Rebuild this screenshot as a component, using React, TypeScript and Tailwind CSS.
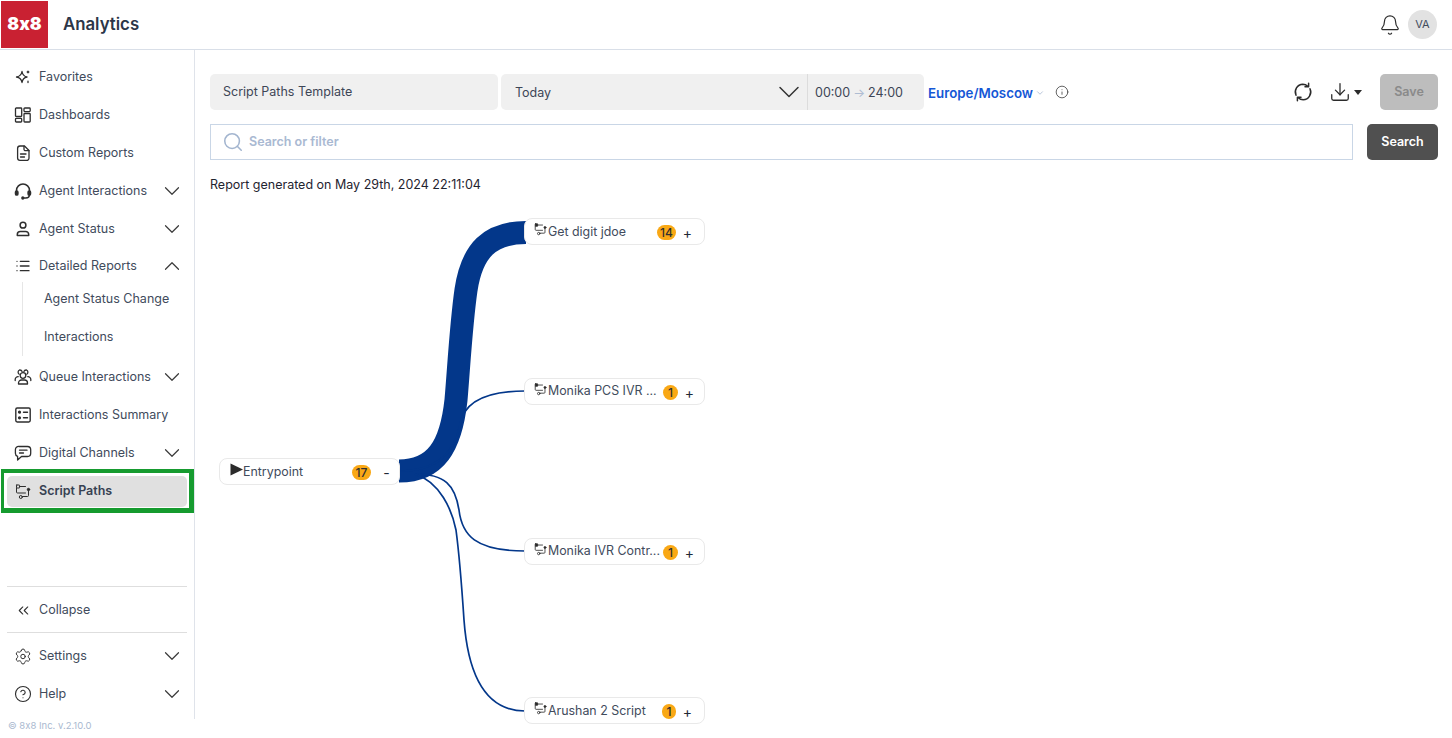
import React from 'react';
import {
  Bell,
  ChevronDown,
  ChevronUp,
  ChevronsLeft,
  CircleHelp,
  Download,
  Info,
  List,
  Search,
  Settings,
} from 'lucide-react';

const S = { fill: 'none', stroke: 'currentColor', strokeWidth: 1.3, strokeLinecap: 'round', strokeLinejoin: 'round' } as const;

function SparkIcon() {
  return (
    <svg viewBox="0 0 18 18" className="w-[18px] h-[18px]" {...S}>
      <path d="M8 3.5 C8.6 7 10 8.4 13 9 C10 9.6 8.6 11 8 14.5 C7.4 11 6 9.6 2.5 9 C6 8.4 7.4 7 8 3.5 Z" />
      <path d="M14 3.2v1.6M13.2 4h1.6M14 13.2v1.4" />
    </svg>
  );
}

function DashIcon() {
  return (
    <svg viewBox="0 0 18 18" className="w-[18px] h-[18px]" {...S}>
      <rect x="1.5" y="2" width="6.2" height="8.5" rx="0.8" />
      <rect x="1.5" y="12.4" width="6.2" height="3.6" rx="0.8" />
      <rect x="10" y="2" width="6.2" height="3.6" rx="0.8" />
      <rect x="10" y="7.5" width="6.2" height="8.5" rx="0.8" />
    </svg>
  );
}

function DocIcon() {
  return (
    <svg viewBox="0 0 18 18" className="w-[18px] h-[18px]" {...S}>
      <path d="M6 2h4.5L15 6.5V14a2.4 2.4 0 0 1-2.4 2.4H6A2.4 2.4 0 0 1 3.6 14V4.4A2.4 2.4 0 0 1 6 2Z" />
      <path d="M10 2.2v3a1.5 1.5 0 0 0 1.5 1.5H15M6.5 10h5.5M6.5 13h4" />
    </svg>
  );
}

function HeadsetIcon() {
  return (
    <svg viewBox="0 0 18 18" className="w-[18px] h-[18px]" {...S} strokeWidth={1.5}>
      <path d="M2.5 10V8.5a6.5 6.5 0 0 1 13 0V10" />
      <rect x="1.5" y="9" width="2.4" height="4" rx="1.1" fill="currentColor" />
      <rect x="14.1" y="9" width="2.4" height="4" rx="1.1" fill="currentColor" />
      <path d="M15.3 13c0 2-1.5 3-3.5 3H9.5" />
      <circle cx="8.8" cy="16" r="0.9" fill="currentColor" />
    </svg>
  );
}

function PersonIcon() {
  return (
    <svg viewBox="0 0 18 18" className="w-[18px] h-[18px]" {...S} strokeWidth={1.5}>
      <circle cx="9" cy="5.2" r="2.9" />
      <path d="M3.3 15.5v-1A3 3 0 0 1 6.3 11.5h5.4a3 3 0 0 1 3 3v1Z" />
    </svg>
  );
}

function GroupIcon() {
  return (
    <svg viewBox="0 0 18 18" className="w-[18px] h-[18px]" {...S}>
      <circle cx="9" cy="7.5" r="2.8" />
      <path d="M4.5 16v-1a3 3 0 0 1 3-3h3a3 3 0 0 1 3 3v1Z" />
      <path d="M5.2 6.2A2.4 2.4 0 0 1 5.5 2a2.5 2.5 0 0 1 2.6 1.6M12.8 6.2A2.4 2.4 0 0 0 12.5 2a2.5 2.5 0 0 0-2.6 1.6" />
      <path d="M1.2 12.5v-1.2a2.8 2.8 0 0 1 3-2.6M16.8 12.5v-1.2a2.8 2.8 0 0 0-3-2.6" />
    </svg>
  );
}

function SummaryIcon() {
  return (
    <svg viewBox="0 0 18 18" className="w-[18px] h-[18px]" {...S} strokeWidth={1.4}>
      <rect x="1.8" y="2" width="14.4" height="14" rx="1.4" />
      <path d="M9.5 6.2h4M9.5 11.8h4" />
      <circle cx="5.5" cy="6.2" r="0.9" fill="currentColor" />
      <circle cx="5.5" cy="11.8" r="0.9" fill="currentColor" />
    </svg>
  );
}

function ChatIcon() {
  return (
    <svg viewBox="0 0 18 18" className="w-[18px] h-[18px]" {...S}>
      <path d="M5 2.5h8.5a3.2 3.2 0 0 1 3.2 3.2v3.6a3.2 3.2 0 0 1-3.2 3.2H7.5L3.6 16v-3.6A3.2 3.2 0 0 1 1.4 9.3V5.7A3.2 3.2 0 0 1 5 2.5Z" />
      <path d="M5.5 6.2h7.5M5.5 9h4" />
    </svg>
  );
}

function ScriptIcon({ size = 16, solid = false }: { size?: number; solid?: boolean }) {
  return (
    <svg viewBox="0 0 16 16" width={size} height={size} {...S} strokeWidth={1}>
      <rect x="1.5" y="1" width="3" height="3" rx="0.3" fill={solid ? 'currentColor' : 'none'} />
      <path d="M4.5 2.5H10.5" />
      <path d="M1.5 4V8a1 1 0 0 0 1 1H10.5" />
      <circle cx="13.5" cy="5.5" r="1.2" fill="currentColor" />
      <path d="M13.5 6.7V11.5a1 1 0 0 1-1 1H7.5" />
      <circle cx="5.8" cy="13" r="1.5" />
    </svg>
  );
}

function RefreshIcon() {
  return (
    <svg viewBox="0 0 20 20" className="w-[20px] h-[20px]" fill="none" stroke="#2b2b2b" strokeWidth="1.5" strokeLinecap="round" strokeLinejoin="round">
      <path d="M3 13.2A7.8 7.8 0 0 1 9.8 2.2c2 0 3.6.7 5 2" />
      <path d="M17 6.8a7.8 7.8 0 0 1-6.8 11c-2 0-3.6-.7-5-2" />
      <path d="M15.6 1.2v3.6H12M4.4 18.8v-3.6H8" />
    </svg>
  );
}

type NavEntry = { label: string; icon: React.ReactNode; chevron?: boolean };

const topNav: NavEntry[] = [
  { label: 'Favorites', icon: <SparkIcon /> },
  { label: 'Dashboards', icon: <DashIcon /> },
  { label: 'Custom Reports', icon: <DocIcon /> },
  { label: 'Agent Interactions', icon: <HeadsetIcon />, chevron: true },
  { label: 'Agent Status', icon: <PersonIcon />, chevron: true },
];

const lowerNav: NavEntry[] = [
  { label: 'Queue Interactions', icon: <GroupIcon />, chevron: true },
  { label: 'Interactions Summary', icon: <SummaryIcon /> },
  { label: 'Digital Channels', icon: <ChatIcon />, chevron: true },
];

function NavRow({ label, icon, chevron }: NavEntry) {
  return (
    <div className="flex items-center h-[38px] pl-[14px] pr-[9px] gap-[7px] text-[12.5px] text-[#414b5c]">
      <span className="w-[18px] h-[18px] flex items-center justify-center text-[#2e2e2e] shrink-0">{icon}</span>
      <span className="flex-1 whitespace-nowrap">{label}</span>
      {chevron && <ChevronDown className="w-[26px] h-[26px] text-[#3a3a3a]" strokeWidth={1.1} />}
    </div>
  );
}

function Sidebar() {
  return (
    <aside className="w-[195px] h-[669px] border-r border-[#dfe3ea] flex flex-col pt-[8px] shrink-0">
      {topNav.map((n) => (
        <NavRow key={n.label} {...n} />
      ))}
      <div className="flex items-center h-[32px] mt-[2px] pl-[14px] pr-[9px] gap-[7px] text-[12.5px] text-[#414b5c]">
        <span className="w-[18px] h-[18px] flex items-center justify-center text-[#2e2e2e]">
          <List className="w-[16px] h-[16px]" strokeWidth={2} />
        </span>
        <span className="flex-1">Detailed Reports</span>
        <ChevronUp className="w-[26px] h-[26px] text-[#3a3a3a]" strokeWidth={1.1} />
      </div>
      <div className="ml-[22px] mb-[2px] border-l border-[#e6e6e6] pl-[21px] text-[12.5px] text-[#414b5c]">
        <div className="h-[36px] pb-[2px] flex items-center">Agent Status Change</div>
        <div className="h-[38px] flex items-center">Interactions</div>
      </div>
      {lowerNav.map((n) => (
        <NavRow key={n.label} {...n} />
      ))}
      <div className="-my-[3px] ml-px h-[44px] w-[193px] border-l-[3px] border-r-[5px] border-t-[4px] border-b-[5px] border-[#169b2f] pl-[3px] pr-[2px] pt-[3px] pb-[1px]">
        <div className="h-full rounded-[5px] bg-[#e0e0e0] flex items-center pl-[7px] gap-[7px] text-[12.5px] font-semibold text-[#364152]">
          <span className="w-[18px] h-[18px] flex items-center justify-center text-[#2e2e2e]">
            <ScriptIcon />
          </span>
          Script Paths
        </div>
      </div>
      <div className="mt-auto mx-[7px] border-t border-[#dedede] h-[46px] pt-[2px] flex items-center pl-[7px] gap-[7px] text-[12.5px] text-[#414b5c]">
        <span className="w-[18px] h-[18px] flex items-center justify-center text-[#2e2e2e]">
          <ChevronsLeft className="w-[17px] h-[17px]" strokeWidth={1.5} />
        </span>
        Collapse
      </div>
      <div className="mx-[7px] border-t border-[#dedede]" />
      <div className="pt-[4px] pb-[6px]">
        <NavRow label="Settings" icon={<Settings className="w-[19px] h-[19px]" strokeWidth={1.3} />} chevron />
        <NavRow label="Help" icon={<CircleHelp className="w-[18px] h-[18px]" strokeWidth={1.5} />} chevron />
      </div>
    </aside>
  );
}

function Toolbar() {
  return (
    <div className="flex items-center h-[36px] text-[12.5px] text-[#3d4656]">
      <div className="w-[288px] h-full rounded-[5px] bg-[#f0f0f0] flex items-center pl-[13px]">Script Paths Template</div>
      <div className="ml-[3px] w-[423px] h-full rounded-[5px] bg-[#f0f0f0] flex items-center">
        <div className="w-[307px] h-full flex items-center justify-between pl-[14px] border-r border-[#dcdcdc]">
          <span className="pt-[2px]">Today</span>
          <ChevronDown className="w-[36px] h-[36px] text-[#333]" strokeWidth={1} />
        </div>
        <div className="pl-[7px] pt-[2px] flex items-center gap-[3px] text-[#3d4656]">
          00:00 <span className="text-[#aebcd2]">→</span> 24:00
        </div>
      </div>
      <span className="ml-[4px] pt-[4px] text-[13.3px] font-semibold text-[#1557d6]">Europe/Moscow</span>
      <ChevronDown className="ml-[2px] mt-[2px] w-[10px] h-[10px] text-[#8ea2c4]" strokeWidth={1.5} />
      <Info className="ml-[10px] w-[14px] h-[14px] text-[#333]" strokeWidth={1.3} />
      <div className="ml-auto flex items-center">
        <RefreshIcon />
        <Download className="ml-[16px] w-[22px] h-[22px] text-[#2b2b2b]" strokeWidth={1.4} />
        <span className="ml-[3px] w-0 h-0 border-x-[4px] border-x-transparent border-t-[5px] border-t-[#2b2b2b]" />
        <button className="ml-[18px] w-[58px] h-[36px] rounded-[5px] bg-[#bdbdbd] text-[#8a8a8a] font-semibold">Save</button>
      </div>
    </div>
  );
}

type NodeData = {
  label: string;
  count: number;
  left: number;
  top: number;
  badge: string;
  textW: string;
  textClass: string;
  action: string;
  actionClass: string;
  entry?: boolean;
};

// node boxes sit on the diagram canvas, offsets are relative to the canvas origin (195, 50)
const nodes: NodeData[] = [
  { label: 'Entrypoint', count: 17, left: 24, top: 408, badge: 'w-[19px]', textW: 'w-[109px]', textClass: 'mt-[2px]', action: '-', actionClass: 'pl-[3px]', entry: true },
  { label: 'Get digit jdoe', count: 14, left: 329, top: 168, badge: 'w-[19px]', textW: 'w-[109px]', textClass: 'mt-[2px]', action: '+', actionClass: 'pr-[5px]' },
  { label: 'Monika PCS IVR ...', count: 1, left: 329, top: 328, badge: 'w-[15px]', textW: 'w-[115px]', textClass: '', action: '+', actionClass: 'pr-[3px]' },
  { label: 'Monika IVR Contr...', count: 1, left: 329, top: 488, badge: 'w-[15px]', textW: 'w-[115px]', textClass: '', action: '+', actionClass: 'pr-[3px]' },
  { label: 'Arushan 2 Script', count: 1, left: 329, top: 647, badge: 'w-[14px]', textW: 'w-[114px]', textClass: 'mt-[2px]', action: '+', actionClass: 'pr-[5px]' },
];

function PathNode({ node }: { node: NodeData }) {
  return (
    <div
      className="absolute w-[181px] h-[27px] bg-white border border-[#e9e9e9] rounded-[8px] flex items-center text-[12.4px] text-[#414b5c] whitespace-nowrap"
      style={{ left: node.left, top: node.top }}
    >
      {node.entry ? (
        <svg viewBox="0 0 13 13" className="ml-[10px] w-[13px] h-[13px] mb-[4px] shrink-0 text-[#2b2b2b]">
          <path d="M0.5 0.5 L13 6.5 L0.5 12.5 Z" fill="currentColor" />
        </svg>
      ) : (
        <span className="ml-[9px] mb-[4px] text-[#2b2b2b] shrink-0 w-[14px]">
          <ScriptIcon size={13} solid />
        </span>
      )}
      <span className={`${node.textW} ${node.textClass} shrink-0`}>{node.label}</span>
      <span className={`${node.badge} h-[15px] mt-[2px] rounded-full bg-[#f9a815] text-[#2f2f2f] text-[12px] font-medium flex items-center justify-center shrink-0`}>
        {node.count}
      </span>
      <span className={`flex-1 text-center mt-[2px] text-[14px] text-[#1f2937] ${node.actionClass}`}>{node.action}</span>
    </div>
  );
}

function Diagram() {
  return (
    <div className="absolute inset-0 pointer-events-none">
      <svg className="absolute left-0 top-0" width="700" height="688" viewBox="195 50 700 688" fill="none" stroke="#03378a">
        <path d="M399 471 C436 471 451 446 456 400 C459 365 461 325 466 290 C472 250 490 232.5 526 232.5" strokeWidth="23" />
        <path d="M400 471 C440 471 455 450 460 425 C463 405 480 391 525 391" strokeWidth="1.7" />
        <path d="M415 474 C445 474 455 485 459 510 C462 535 475 551 525 551" strokeWidth="1.7" />
        <path d="M415 474 C440 482 452 510 456 530 C460 560 462 590 464 620 C468 675 485 711 525 711" strokeWidth="1.7" />
      </svg>
      {nodes.map((n) => (
        <PathNode key={n.label} node={n} />
      ))}
    </div>
  );
}

export default function App() {
  return (
    <div className="h-[738px] w-[1452px] overflow-hidden bg-white relative" style={{ fontFamily: 'Inter, "Liberation Sans", sans-serif' }}>
      <header className="h-[50px] border-b border-[#d9dfe8] flex items-center pl-px pr-[15px]">
        <div className="w-[47px] h-[47px] bg-[#c92132] flex items-center justify-center text-white text-[17.5px] font-black [font-feature-settings:'calt'_0]">8x8</div>
        <div className="ml-[15px] text-[16.8px] font-semibold text-[#2c3648]">Analytics</div>
        <Bell className="ml-auto w-[22px] h-[22px] text-[#2b2b2b]" strokeWidth={1.3} />
        <div className="ml-[7px] w-[29px] h-[29px] rounded-full bg-[#e2e2e2] flex items-center justify-center text-[11px] text-[#414b5c]">VA</div>
      </header>
      <div className="flex relative">
        <Sidebar />
        <main className="flex-1 pl-[15px] pr-[14px] pt-[24px]">
          <Toolbar />
          <div className="flex mt-[14px] h-[36px]">
            <div className="flex-1 border border-[#c9d6e6] flex items-center pl-[11px] text-[12.5px] font-semibold text-[#a9b9d2]">
              <Search className="w-[22px] h-[22px] mr-[5px] text-[#a3b5cf]" strokeWidth={1.7} />
              Search or filter
            </div>
            <button className="ml-[14px] w-[71px] rounded-[5px] bg-[#505050] text-white text-[12.5px] font-semibold">Search</button>
          </div>
          <div className="mt-[16px] text-[12.5px] text-[#1f2430]">Report generated on May 29th, 2024 22:11:04</div>
        </main>
        <div className="absolute left-[195px] top-0 w-[700px] h-[688px] pointer-events-none">
          <Diagram />
        </div>
      </div>
      <div className="absolute left-[8px] top-[719px] text-[9.5px] text-[#aab9d0] [font-feature-settings:'calt'_0]">© 8x8 Inc. v.2.10.0</div>
    </div>
  );
}
